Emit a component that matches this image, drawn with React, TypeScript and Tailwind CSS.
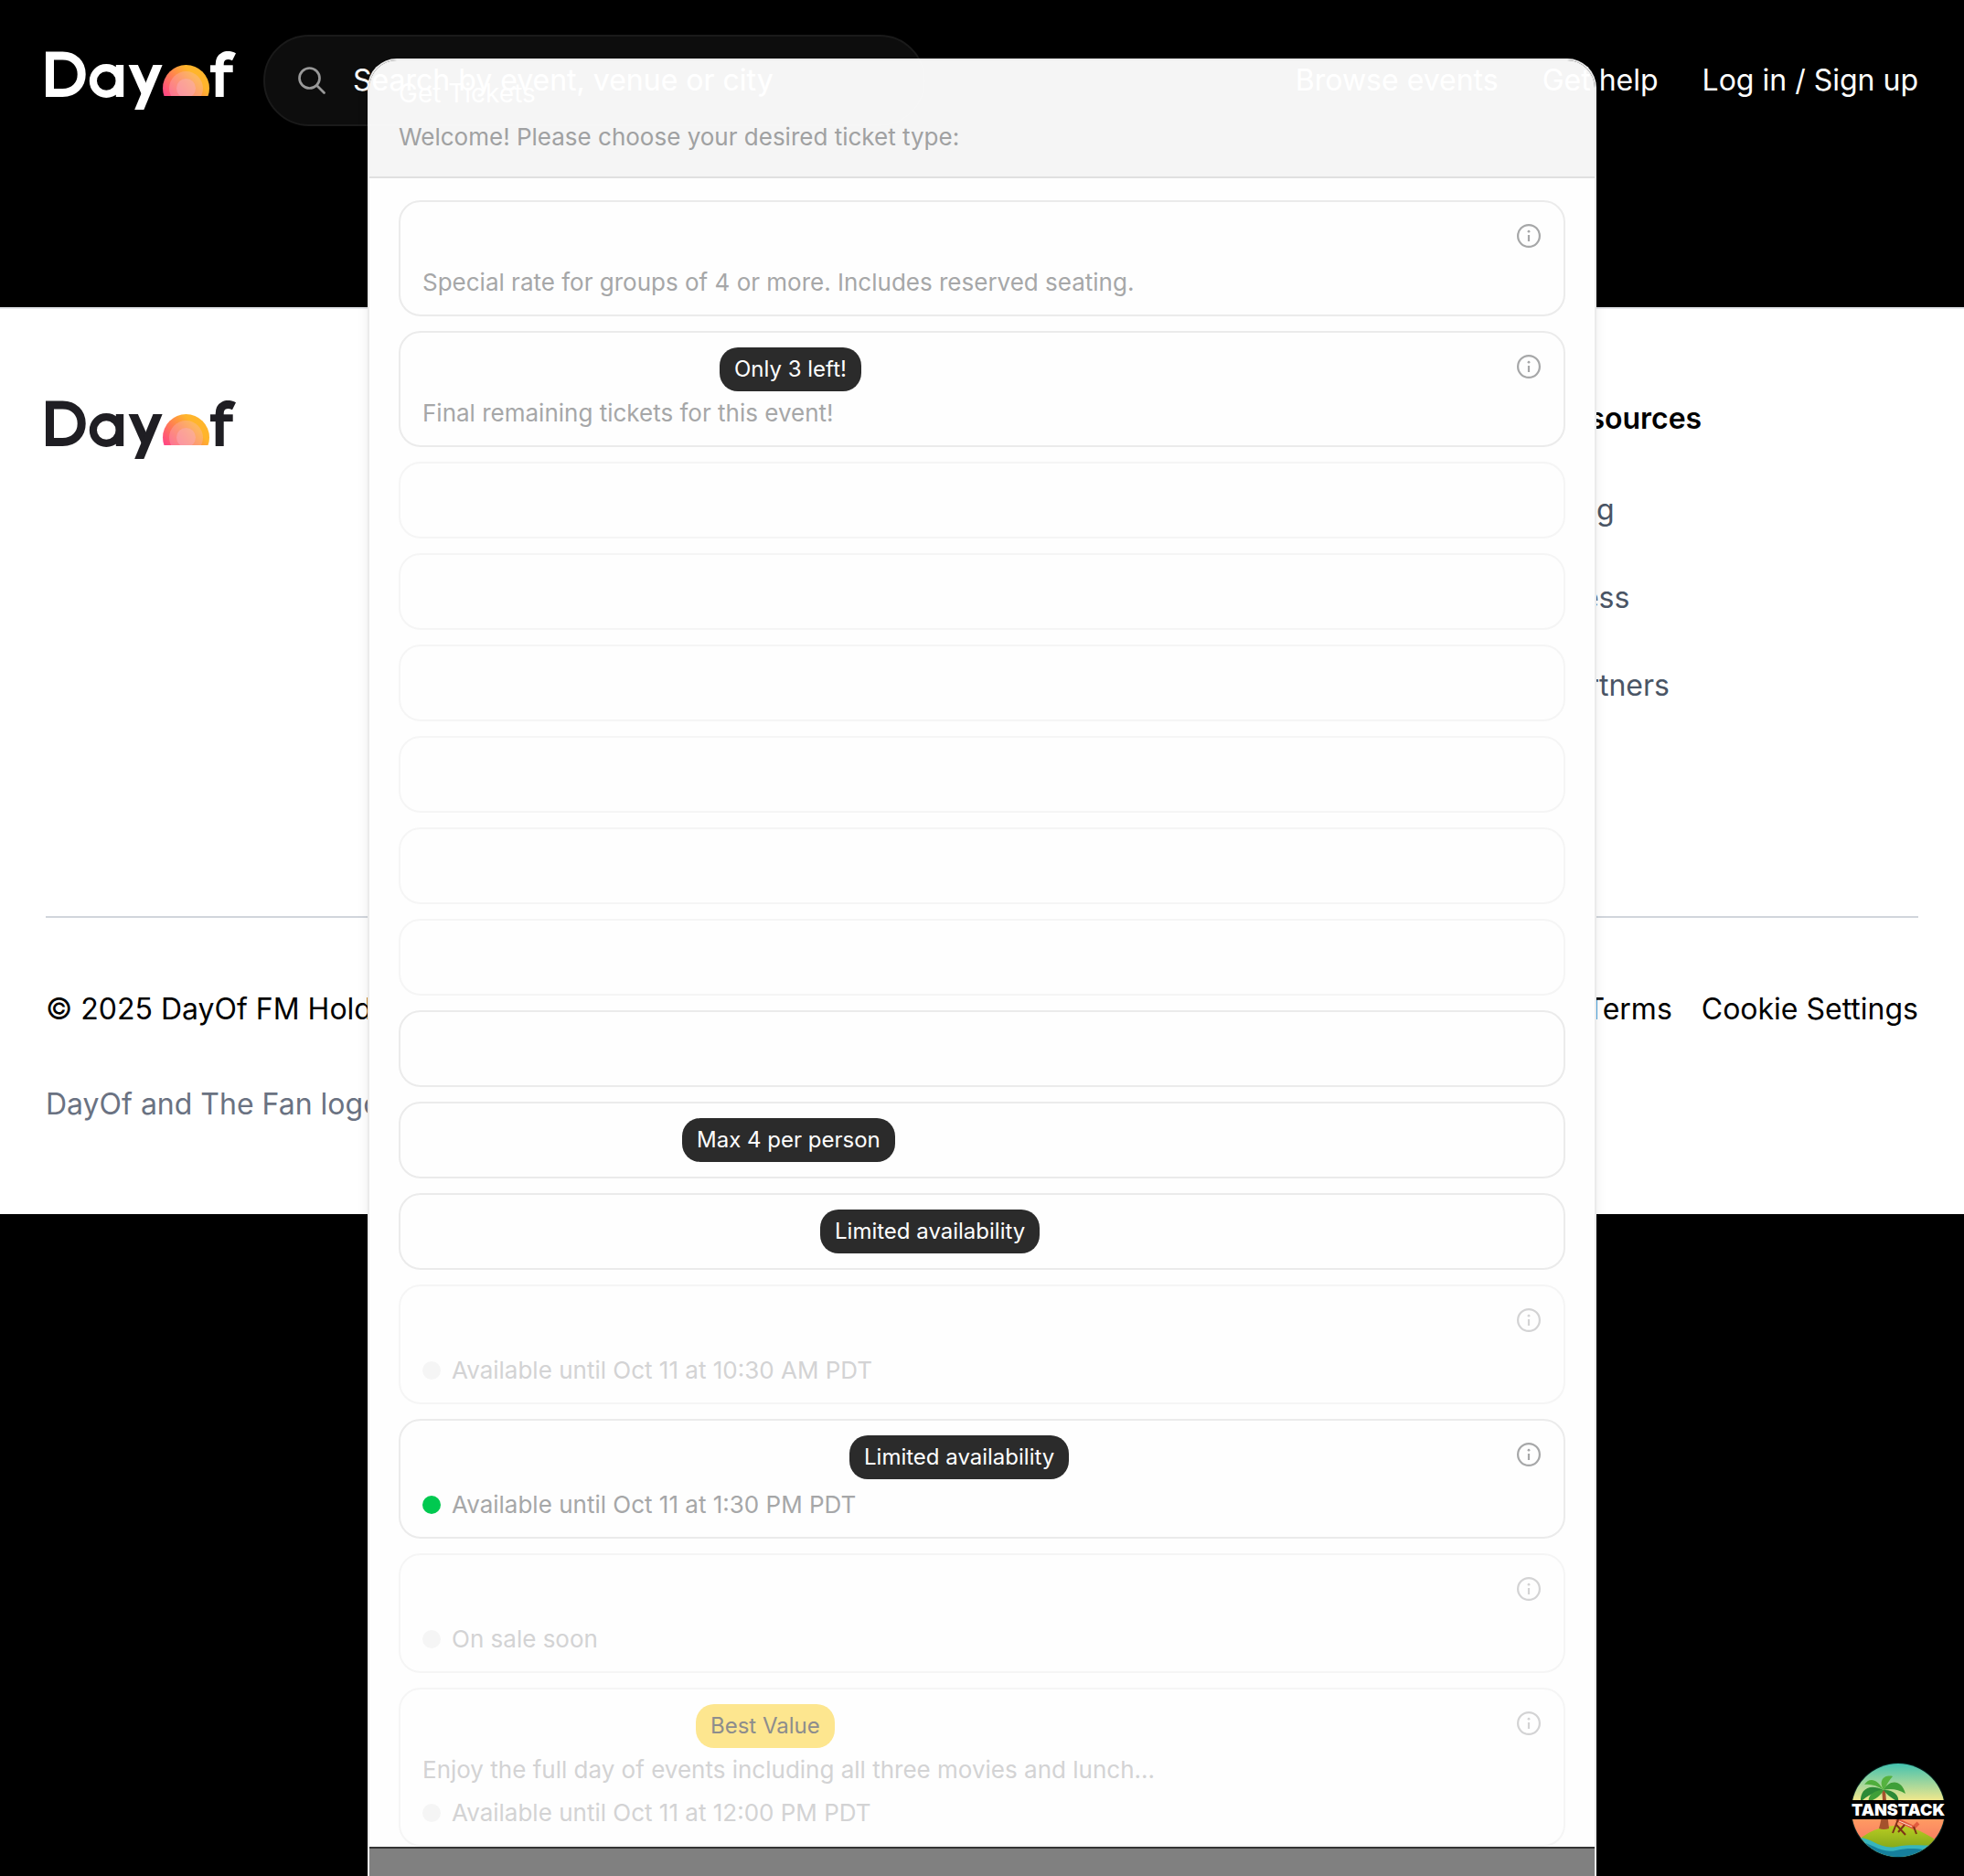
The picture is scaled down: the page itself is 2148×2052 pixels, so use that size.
import React from "react";

function Logo({ dark = false }: { dark?: boolean }) {
  const id = dark ? "sun-dark" : "sun-light";
  return (
    <svg
      role="img"
      aria-label="DayOf"
      viewBox="0 0 208 64"
      className={dark ? "h-16 w-52 text-[#1f1e23]" : "h-16 w-52 text-white"}
    >
      <defs>
        <linearGradient id={id} x1="0" y1="0.85" x2="0.85" y2="0.1">
          <stop offset="0.1" stopColor="#ff3f8b" />
          <stop offset="0.5" stopColor="#ff8150" />
          <stop offset="0.8" stopColor="#ffb52b" />
        </linearGradient>
        <clipPath id={id + "-horizon"}>
          <rect x="120" y="10" width="60" height="39" />
        </clipPath>
        <clipPath id={id + "-tail"}>
          <rect x="86" y="15" width="46" height="49" />
        </clipPath>
      </defs>
      <g fill="none" stroke="currentColor" strokeWidth="9">
        <path d="M4.500 5H18.500C31 5 39.200 13.500 39.200 25.200S31 45.400 18.500 45.400H4.500Z" />
        <circle cx="66.300" cy="32.500" r="14.400" strokeWidth="8.200" />
        <path d="M81 15V50" strokeWidth="8.400" />
        <g clipPath={`url(#${id}-tail)`} strokeWidth="9.400">
          <path d="M93.500 10L109.500 46" />
          <path d="M124.600 10L100.600 68" />
        </g>
        <path d="M190.200 50V14.500C190.200 5.500 197.500 2 206 6.200" />
        <path d="M180 19.200H204.700" strokeWidth="7.800" />
      </g>
      <g clipPath={`url(#${id}-horizon)`}>
        <circle cx="153.500" cy="40.500" r="25.500" fill={`url(#${id})`} />
        <circle cx="153.500" cy="40.500" r="18.500" fill="#f9b8cf" fillOpacity="0.32" />
        <circle cx="153.500" cy="40.500" r="10.500" fill="#f9b0c8" fillOpacity="0.42" />
      </g>
    </svg>
  );
}

function InfoIcon() {
  return (
    <svg viewBox="0 0 28 28" className="size-7" fill="none" stroke="currentColor" aria-hidden="true">
      <circle cx="14" cy="14" r="11.900" strokeWidth="2.200" />
      <path d="M14 13V20" strokeWidth="2.200" />
      <circle cx="14" cy="9.200" r="1.400" fill="currentColor" stroke="none" />
    </svg>
  );
}

function IslandBadge() {
  return (
    <svg viewBox="0 0 104 104" className="size-[104px]" aria-hidden="true">
      <defs>
        <linearGradient id="sky" x1="0" y1="0" x2="0" y2="1">
          <stop offset="0" stopColor="#3fc1b0" />
          <stop offset="0.4" stopColor="#f2e88c" />
          <stop offset="0.6" stopColor="#ff9a62" />
          <stop offset="0.85" stopColor="#f77a62" />
        </linearGradient>
        <linearGradient id="hill" x1="0" y1="0" x2="0" y2="1">
          <stop offset="0" stopColor="#b9cc22" />
          <stop offset="1" stopColor="#6f9a17" />
        </linearGradient>
        <clipPath id="disc">
          <circle cx="52" cy="52" r="51" />
        </clipPath>
      </defs>
      <circle cx="52" cy="52" r="52" fill="#04211f" />
      <g clipPath="url(#disc)">
        <rect width="104" height="104" fill="url(#sky)" />
        <path d="M0 92C20 72 38 69 52 69S82 76 104 92V104H0Z" fill="url(#hill)" />
        <path d="M34 30C36 44 35 58 31 72Q36 74 42 72C40 56 39 42 38 30Z" fill="#a4512c" />
        <path d="M36 30C29 17 20 16 15 24C21 23 29 25 36 30Z" fill="#4fae3c" />
        <path d="M36 30C20 22 10 30 11 43C18 36 27 32 36 30Z" fill="#2c8a37" />
        <path d="M36 30C26 30 18 36 20 43C27 40 33 36 36 30Z" fill="#3f9f38" />
        <path d="M36 30C30 19 37 13 46 15C42 19 40 24 36 30Z" fill="#55b23f" />
        <path d="M36 30C42 18 56 18 60 34C52 29 44 28 36 30Z" fill="#3f9f38" />
        <path d="M36 30C45 29 54 35 52 43C46 39 40 36 36 30Z" fill="#2c8a37" />
        <path d="M50 62L69 71L74 66" fill="none" stroke="#e25b3e" strokeWidth="4" />
        <path d="M53 64L67 70" fill="none" stroke="#f4d9c8" strokeWidth="1" />
        <path d="M52 62L46 77M50 68L60 79M69 70L72 78M59 68L52 76" stroke="#7d3217" strokeWidth="2" />
        <path d="M0 84C20 76 28 96 50 92S80 93 104 88V104H0Z" fill="#37b5bd" />
        <path d="M0 88C20 82 30 101 50 96S80 97 104 96V104H0Z" fill="#167f9c" />
      </g>
      <rect y="41" width="104" height="21" fill="#000" />
      <text x="52" y="58" textAnchor="middle" fill="#fff" className="font-['Inter'] text-[18px] font-black">
        TANSTACK
      </text>
    </svg>
  );
}

type Ticket = {
  name: string;
  faded?: boolean;
  info?: boolean;
  badge?: { text: string; indent: string; gold?: boolean };
  description?: string;
  status?: string;
};

const tickets: Ticket[] = [
  { name: "group", info: true, description: "Special rate for groups of 4 or more. Includes reserved seating." },
  {
    name: "final",
    info: true,
    badge: { text: "Only 3 left!", indent: "ml-[325px]" },
    description: "Final remaining tickets for this event!",
  },
  { name: "tier-1", faded: true },
  { name: "tier-2", faded: true },
  { name: "tier-3", faded: true },
  { name: "tier-4", faded: true },
  { name: "tier-5", faded: true },
  { name: "tier-6", faded: true },
  { name: "general" },
  { name: "member", badge: { text: "Max 4 per person", indent: "ml-[284px]" } },
  { name: "premium", badge: { text: "Limited availability", indent: "ml-[435px]" } },
  { name: "morning", faded: true, info: true, status: "Available until Oct 11 at 10:30 AM PDT" },
  {
    name: "afternoon",
    info: true,
    badge: { text: "Limited availability", indent: "ml-[467px]" },
    status: "Available until Oct 11 at 1:30 PM PDT",
  },
  { name: "evening", faded: true, info: true, status: "On sale soon" },
  {
    name: "full-day",
    faded: true,
    info: true,
    badge: { text: "Best Value", indent: "ml-[299px]", gold: true },
    description: "Enjoy the full day of events including all three movies and lunch...",
    status: "Available until Oct 11 at 12:00 PM PDT",
  },
];

function TicketCard({ ticket }: { ticket: Ticket }) {
  const { faded, info, badge, description, status } = ticket;
  return (
    <li
      className={
        "rounded-3xl border-2 px-6 py-4 text-[26px] leading-[39px] " +
        (faded ? "border-[#f5f5f5] text-[#d3d3d4]" : "border-[#ebebeb] text-[#a6a7a8]")
      }
    >
      <div className="flex h-12 items-start">
        {badge && (
          <span
            className={
              "flex h-12 items-center rounded-[20px] px-4 text-2xl " +
              badge.indent +
              (badge.gold ? " bg-[#fde68f] text-[#8d8d8d]" : " bg-[#2b2b2b] text-white")
            }
          >
            {badge.text}
          </span>
        )}
        {info && (
          <button type="button" aria-label="Ticket details" className="mt-[7px] ml-auto">
            <InfoIcon />
          </button>
        )}
      </div>
      {description && <p className="mt-1">{description}</p>}
      {status && (
        <p className="mt-2 flex items-center gap-3">
          <span className={"size-5 rounded-full " + (faded ? "bg-[#f5f5f5]" : "bg-[#00c950]")} />
          {status}
        </p>
      )}
    </li>
  );
}

export default function App() {
  return (
    <div className="relative h-screen overflow-hidden bg-black font-['Inter',sans-serif] text-[32px] leading-[48px] text-white">
      <header className="flex h-[336px] items-start justify-between px-[50px] pt-[38px]">
        <div className="flex items-center gap-[30px]">
          <a href="#home">
            <Logo />
          </a>
          <label className="flex h-[100px] w-[724px] items-center rounded-full border-2 border-[#1a1a1a] bg-[#0d0d0d] pl-9">
            <svg viewBox="0 0 30 30" className="size-[30px] text-[#999]" fill="none" stroke="currentColor" strokeWidth="2.700" strokeLinecap="round" aria-hidden="true">
              <circle cx="12.500" cy="12.500" r="11" />
              <path d="M20.500 20.500L28.500 28.500" />
            </svg>
            <input
              type="text"
              aria-label="Search"
              placeholder="Search by event, venue or city"
              className="ml-[30px] flex-1 bg-transparent outline-none placeholder:text-white"
            />
          </label>
        </div>
        <nav className="flex h-[100px] items-center gap-12">
          <a href="#browse">Browse events</a>
          <a href="#help">Get help</a>
          <a href="#login">Log in / Sign up</a>
        </nav>
      </header>

      <footer className="h-[992px] border-t-2 border-[#e5e7eb] bg-white px-[50px] pt-[100px] text-black">
        <div className="flex h-[564px] items-start justify-between">
          <a href="#home">
            <Logo dark />
          </a>
          <div className="w-[400px]">
            <h2 className="leading-10 font-semibold">Resources</h2>
            <ul className="mt-14 space-y-12 text-[#4a5565]">
              <li><a href="#blog">Blog</a></li>
              <li><a href="#press">Press</a></li>
              <li><a href="#partners">Partners</a></li>
            </ul>
          </div>
        </div>
        <div className="flex justify-between border-t-2 border-[#d1d5dc] pt-[76px]">
          <p>© 2025 DayOf FM Holdings</p>
          <div className="flex gap-8">
            <a href="#terms">Terms</a>
            <a href="#cookies">Cookie Settings</a>
          </div>
        </div>
        <p className="mt-14 text-[#6a7282]">DayOf and The Fan logos</p>
      </footer>

      <div className="absolute inset-0 flex justify-center pt-16">
        <section
          role="dialog"
          aria-label="Get Tickets"
          className="flex h-full w-full max-w-[1344px] flex-col overflow-hidden rounded-t-[32px] border-2 border-b-0 border-[#ebebeb] shadow-lg"
        >
          <div className="border-b-2 border-[#e0e0e0] bg-white/96 px-8 pt-4 pb-6">
            <h2 className="text-[28px] leading-[40px] text-white">Get Tickets</h2>
            <p className="mt-2 text-[26px] leading-[39px] text-[#a0a1a2]">
              Welcome! Please choose your desired ticket type:
            </p>
          </div>
          <ul className="flex flex-col gap-4 bg-[#fefefe] px-8 pt-6">
            {tickets.map((ticket) => (
              <TicketCard key={ticket.name} ticket={ticket} />
            ))}
          </ul>
          <div className="flex-1 border-t-2 border-[#333] bg-[#808080]" />
        </section>
      </div>

      <button type="button" aria-label="TanStack devtools" className="absolute right-5 bottom-5">
        <IslandBadge />
      </button>
    </div>
  );
}
